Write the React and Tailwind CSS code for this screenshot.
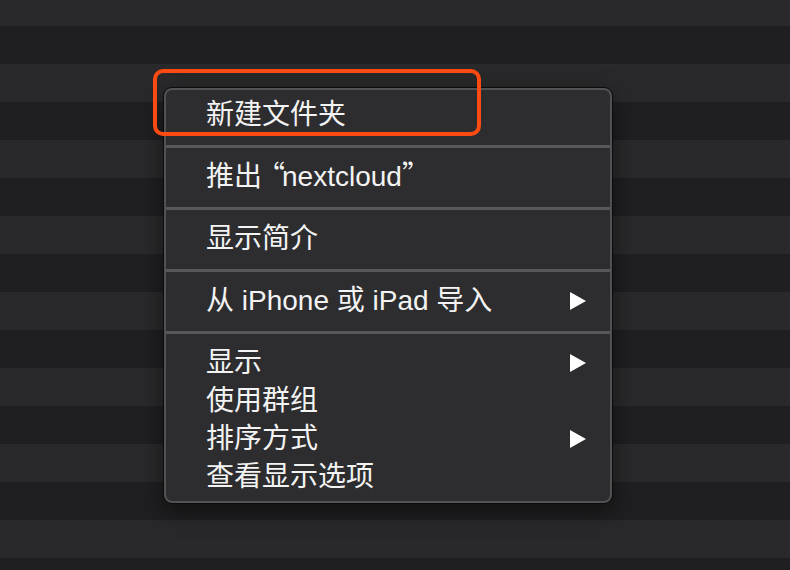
import React from 'react';

const Q = ({ children, className = '' }) => (
  <span className={`leading-[0] ${className}`} style={{ fontFamily: '"Noto Sans CJK SC", sans-serif' }}>
    {children}
  </span>
);

const sections = [
  [{ label: '新建文件夹' }],
  [{ label: <>推出<Q className="-ml-[5px] -mr-[3px]">“</Q>nextcloud<Q>”</Q></> }],
  [{ label: '显示简介' }],
  [{ label: '从 iPhone 或 iPad 导入', sub: true }],
  [
    { label: '显示', sub: true },
    { label: '使用群组' },
    { label: '排序方式', sub: true },
    { label: '查看显示选项' },
  ],
];

const Arrow = () => (
  <svg width="18" height="20" viewBox="0 0 18 20" className="text-white">
    <polygon points="1,1 17,10 1,19" fill="currentColor" />
  </svg>
);

const MenuItem = ({ label, sub }) => (
  <div className="flex items-center justify-between h-[38px] pl-[40px] pr-[23px] text-[28px] leading-none text-[#f3f3f3]">
    <span>{label}</span>
    {sub && <Arrow />}
  </div>
);

const App = () => {
  const stripes = Array.from({ length: 16 });

  return (
    <div
      className="relative w-[790px] h-[570px] overflow-hidden bg-[#1f1f21]"
      style={{ fontFamily: '"Liberation Sans", "Noto Sans CJK SC", sans-serif' }}
    >
      {/* list background rows */}
      <div className="flex flex-col">
        <div className="h-[26px] bg-[#29292b]" />
        {stripes.map((_, i) => (
          <div key={i} className={`h-[38px] ${i % 2 === 0 ? 'bg-[#1f1f21]' : 'bg-[#29292b]'}`} />
        ))}
      </div>

      {/* context menu */}
      <div className="absolute left-[164px] top-[88px] w-[448px] rounded-[8px] border-2 border-[#525254] bg-[#2d2d2f] pt-[6px] pb-[5px] shadow-[0_0_0_1px_#0b0b0c,0_8px_24px_rgba(0,0,0,0.5)]">
        {sections.map((items, si) => (
          <div key={si}>
            {si > 0 && (
              <div className="h-[24px] flex items-center">
                <div className="w-full h-[3px] bg-[#58585a]" />
              </div>
            )}
            {items.map((it, ii) => (
              <MenuItem key={ii} {...it} />
            ))}
          </div>
        ))}
      </div>

      {/* annotation */}
      <div className="absolute left-[153px] top-[69px] w-[328px] h-[67px] rounded-[10px] border-4 border-[#fb4a12]" />
    </div>
  );
};

export default App;
